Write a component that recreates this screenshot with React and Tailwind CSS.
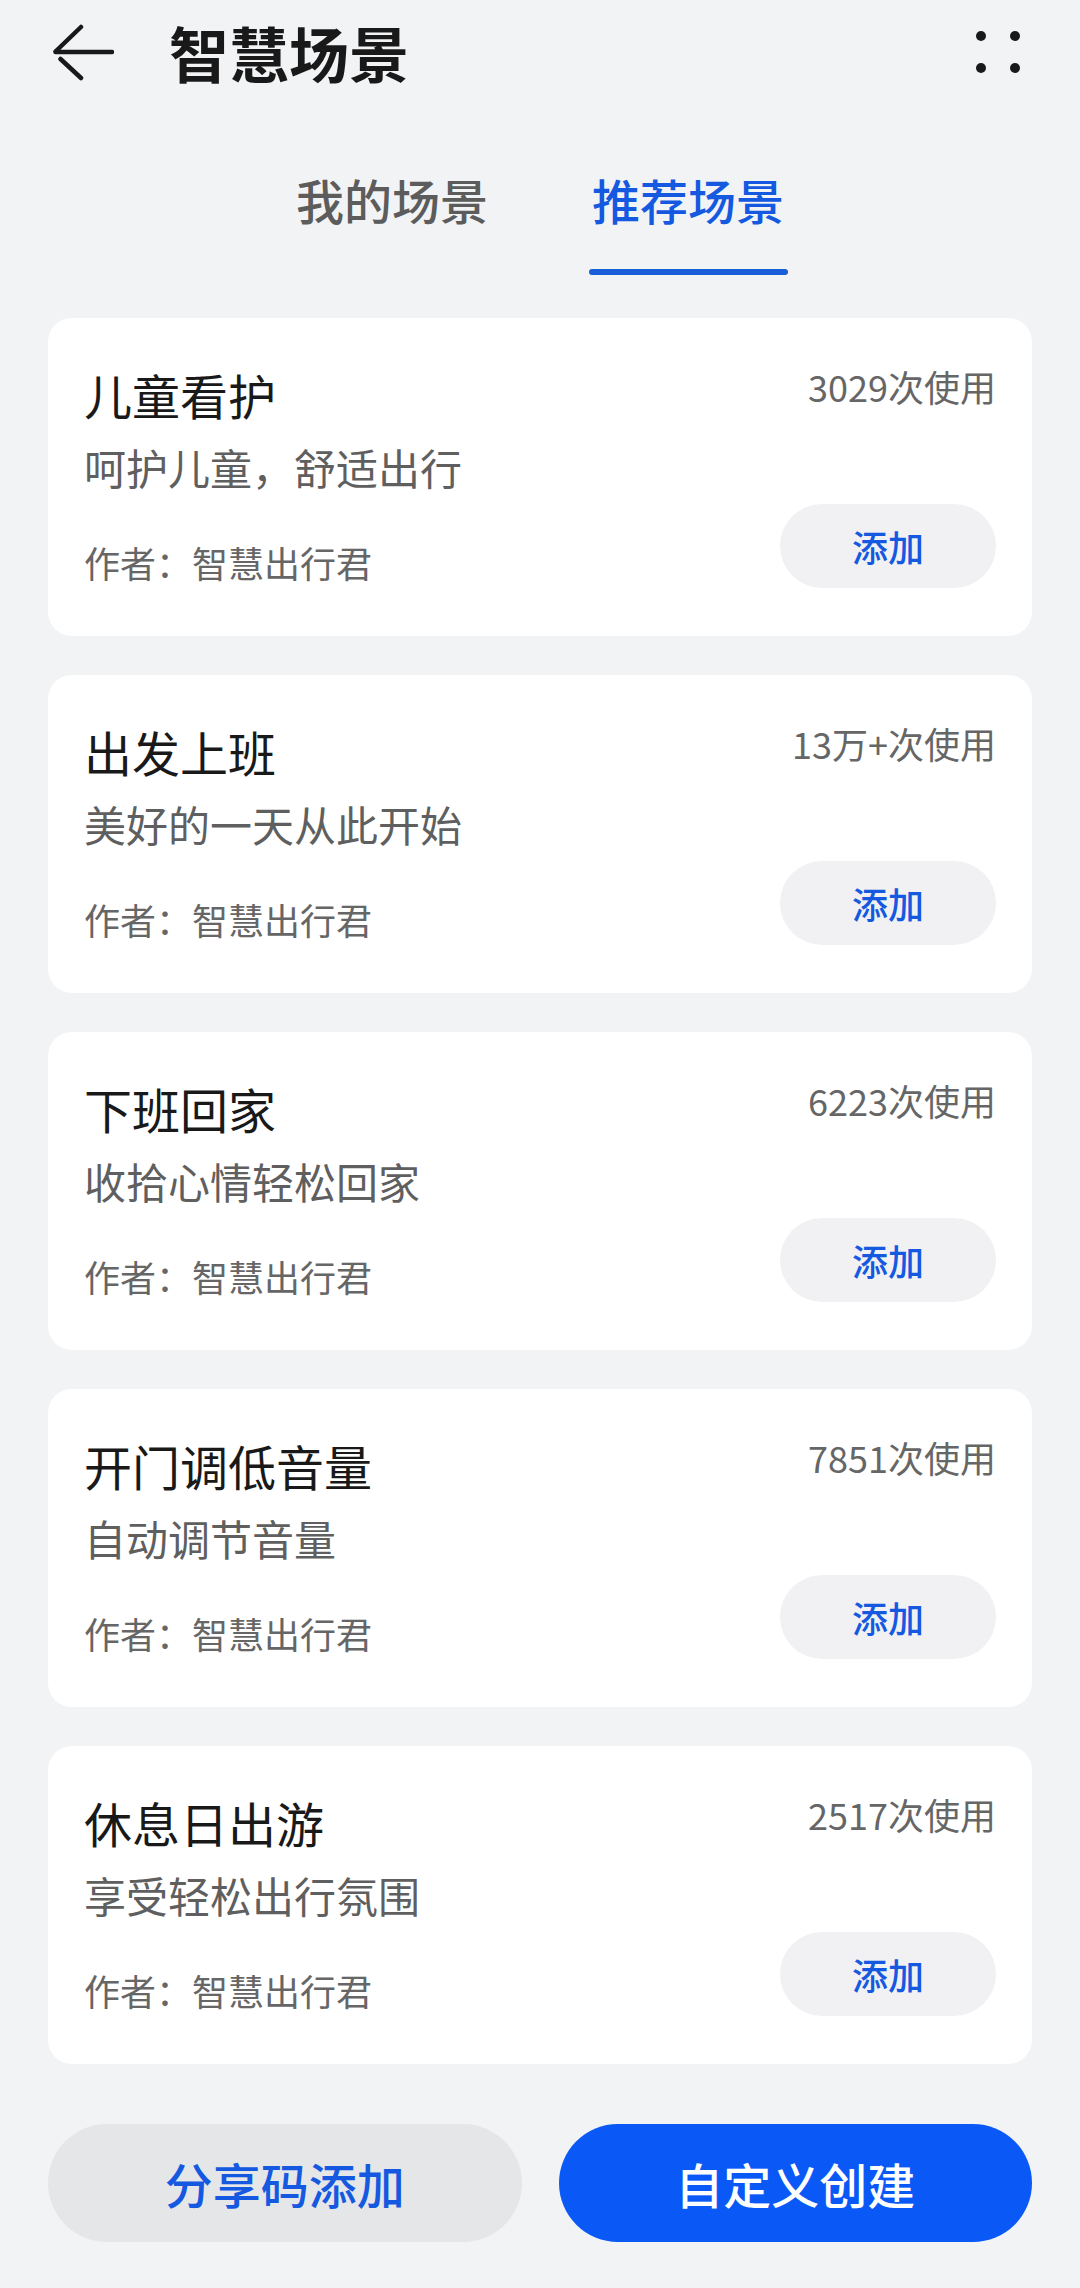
const SCENES = [
  { title: "儿童看护", desc: "呵护儿童，舒适出行", uses: "3029次使用" },
  { title: "出发上班", desc: "美好的一天从此开始", uses: "13万+次使用" },
  { title: "下班回家", desc: "收拾心情轻松回家", uses: "6223次使用" },
  { title: "开门调低音量", desc: "自动调节音量", uses: "7851次使用" },
  { title: "休息日出游", desc: "享受轻松出行氛围", uses: "2517次使用" },
];

const BackIcon = () => (
  <svg width="64" height="60" viewBox="0 0 64 60" fill="none">
    <path
      d="M31 5 L5.5 29.5 M5.5 30 H62 M10.5 37 L31 56"
      stroke="#191919"
      strokeWidth="4.5"
      strokeLinecap="round"
    />
  </svg>
);

const MoreIcon = () => (
  <svg width="50" height="50" viewBox="0 0 50 50" fill="#191919">
    <circle cx="8" cy="9" r="5" />
    <circle cx="42" cy="9" r="5" />
    <circle cx="8" cy="41" r="5" />
    <circle cx="42" cy="41" r="5" />
  </svg>
);

const SceneCard = ({ title, desc, uses }) => (
  <div className="h-[318px] bg-white rounded-[24px] flex justify-between pl-[36px] pr-[36px]">
    <div className="flex flex-col pt-[44px]">
      <div className="text-[48px] leading-[64px] text-[#191919]">{title}</div>
      <div className="mt-[13px] text-[42px] leading-[56px] text-[#5f5f5f]">{desc}</div>
      <div className="mt-[43px] text-[36px] leading-[48px] text-[#666666]">作者：智慧出行君</div>
    </div>
    <div className="flex flex-col items-end pt-[44px]">
      <div className="text-[36px] leading-[48px] text-[#666666] whitespace-nowrap">{uses}</div>
      <button className="mt-[94px] w-[216px] h-[84px] rounded-full bg-[#f1f1f3] text-[36px] font-medium text-[#1459e0]">
        添加
      </button>
    </div>
  </div>
);

export default function App() {
  return (
    <div
      className="w-[1080px] min-h-[2288px] bg-[#f1f3f5]"
      style={{ fontFamily: '"Noto Sans CJK SC", "Noto Sans", sans-serif' }}
    >
      {/* header */}
      <div className="h-[104px] flex items-center justify-between pl-[50px] pr-[57px]">
        <div className="flex items-center">
          <BackIcon />
          <h1 className="ml-[55px] text-[60px] leading-none font-semibold text-[#191919]">智慧场景</h1>
        </div>
        <MoreIcon />
      </div>

      {/* tabs */}
      <div className="flex justify-center gap-[97px] pt-[67px] pb-[43px]">
        <div className="flex flex-col items-center">
          <span className="text-[48px] leading-[56px] font-medium text-[#5c5c5c]">我的场景</span>
          <span className="mt-[42px] w-[199px] h-[6px]" />
        </div>
        <div className="flex flex-col items-center">
          <span className="text-[48px] leading-[56px] font-medium text-[#1459e0]">推荐场景</span>
          <span className="mt-[42px] w-[199px] h-[6px] rounded-full bg-[#1a5dd8]" />
        </div>
      </div>

      {/* scene cards */}
      <div className="flex flex-col gap-[39px] px-[48px]">
        {SCENES.map((s) => (
          <SceneCard key={s.title} {...s} />
        ))}
      </div>

      {/* bottom actions */}
      <div className="flex gap-[37px] px-[48px] mt-[60px]">
        <button className="flex-1 h-[118px] rounded-full bg-[#e5e6e8] text-[48px] font-medium text-[#1459e0]">
          分享码添加
        </button>
        <button className="flex-1 h-[118px] rounded-full bg-[#0a59f7] text-[48px] font-medium text-white">
          自定义创建
        </button>
      </div>
    </div>
  );
}
